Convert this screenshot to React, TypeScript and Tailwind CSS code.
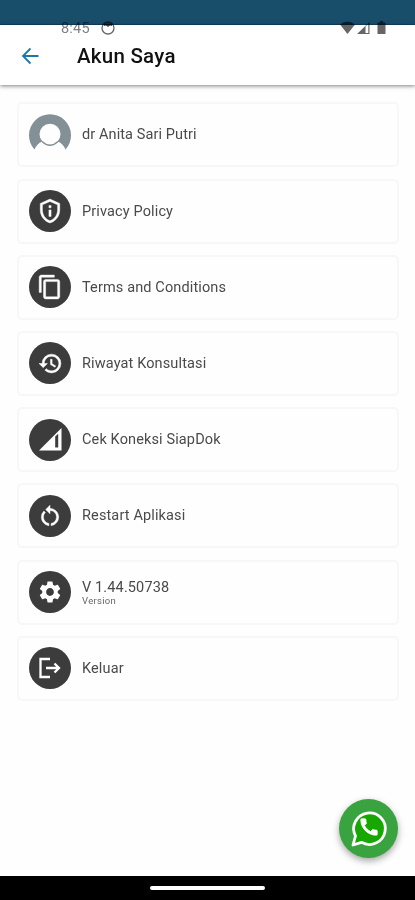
import type { ReactNode } from "react";
import { MdContentCopy, MdHistory, MdOutlinePrivacyTip, MdRestartAlt, MdSettings, MdCall } from "react-icons/md";

type Item = {
  label: string;
  caption?: string;
  textClass: string;
  icon: ReactNode;
  avatar?: boolean;
};

const ITEMS: Item[] = [
  { label: "dr Anita Sari Putri", textClass: "tracking-[0.1px]", icon: <Avatar />, avatar: true },
  {
    label: "Privacy Policy",
    textClass: "tracking-[0.13px]",
    icon: <MdOutlinePrivacyTip className="w-[26px] h-[26px] stroke-current [stroke-width:0.4] [&_path[fill=none]]:stroke-none" />,
  },
  {
    label: "Terms and Conditions",
    textClass: "tracking-[0.13px]",
    icon: <MdContentCopy className="w-[26px] h-[26px] stroke-current [stroke-width:0.4] [&_path[fill=none]]:stroke-none" />,
  },
  {
    label: "Riwayat Konsultasi",
    textClass: "tracking-[0.13px]",
    icon: <MdHistory className="w-[25px] h-[25px] stroke-current [stroke-width:0.5] [&_path[fill=none]]:stroke-none" />,
  },
  { label: "Cek Koneksi SiapDok", textClass: "tracking-[0.13px]", icon: <SignalIcon /> },
  {
    label: "Restart Aplikasi",
    textClass: "tracking-[0.13px]",
    icon: <MdRestartAlt className="w-[26px] h-[26px] stroke-current [stroke-width:0.4] [&_path[fill=none]]:stroke-none" />,
  },
  { label: "V 1.44.50738", caption: "Version", textClass: "tracking-[0.13px]", icon: <MdSettings className="w-[26px] h-[26px]" /> },
  { label: "Keluar", textClass: "tracking-[0.13px]", icon: <ExitIcon /> },
];

function Avatar() {
  return (
    <svg viewBox="0 0 42 42" className="w-[42px] h-[42px]">
      <path
        d="M5.5 35.5A21 21 0 1 1 36.5 35.5C35 31.5 32 28.5 28.5 27.5A10.5 10.5 0 1 0 13.5 27.5C10 28.5 7 31.5 5.5 35.5Z"
        fill="#839197"
      />
      <path d="M13 27.5Q21 35 29 27.5" fill="none" stroke="#839197" strokeWidth="1.3" />
    </svg>
  );
}

function SignalIcon() {
  return (
    <svg viewBox="0 0 24 24" className="w-6 h-6">
      <path d="M1 22.5L23.5 0V22.5ZM17.2 8.5V19.5H20.2V5.7Z" fill="currentColor" fillRule="evenodd" />
    </svg>
  );
}

function ExitIcon() {
  return (
    <svg viewBox="0 0 24 24" className="w-6 h-6" fill="none" stroke="currentColor" strokeWidth="2.3">
      <path d="M12 3H2.5V21H12M8 12H21M16.5 7.5L21 12L16.5 16.5" />
    </svg>
  );
}

function StatusBar() {
  return (
    <div className="absolute top-[21px] left-0 w-full h-[14px] flex items-center pl-[61px] pr-[27px] text-[#666] mix-blend-multiply">
      <span className="mt-[2px] text-[14.5px] leading-[14px] tracking-[0.2px] text-[#808080]">8:45</span>
      <svg viewBox="0 0 14 14" className="w-[14px] h-[14px] ml-[11px]">
        <circle cx="7" cy="7" r="6" fill="none" stroke="currentColor" strokeWidth="1.3" />
        <path d="M3 2.5H11V5L9 4.5L7 6L5 4.5L3 5Z" fill="#553b42" />
      </svg>
      <svg viewBox="0 0 48 14" className="w-12 h-[14px] ml-auto">
        <path d="M0 3.5Q7.5 -2.5 15 3.5L7.5 13Z" fill="currentColor" />
        <path d="M17 13L29.5 1V13ZM25.5 5.5V12H28.3V3Z" fill="currentColor" fillRule="evenodd" />
        <path d="M37.5 1.5H40V0H43V1.5H45.5V13H37.5Z" fill="currentColor" />
      </svg>
    </div>
  );
}

export default function App() {
  return (
    <div className="relative w-full h-[900px] flex flex-col overflow-hidden bg-[#fefefe] font-[Roboto,sans-serif]">
      <div className="h-[25px] shrink-0 bg-[#194e6b] border-b border-[#123f62]" />
      <StatusBar />

      <header className="h-[60px] shrink-0 flex items-center bg-white pl-[21px] shadow-[0_1px_4px_rgba(0,0,0,0.5)]">
        <svg viewBox="0 0 18 18" className="w-[18px] h-[18px] mt-px" fill="none" stroke="#1d78a8" strokeWidth="1.8">
          <path d="M17.5 9H2M9.5 1.5L2 9L9.5 16.5" />
        </svg>
        <h1 className="ml-[38px] mt-px text-[20.5px] leading-6 font-medium tracking-[0.25px] text-[#111]">Akun Saya</h1>
      </header>

      <main className="flex-1 flex flex-col gap-[11.2px] pt-[17.4px] pl-[17px] pr-4">
        {ITEMS.map((item) => (
          <div
            key={item.label}
            className="h-[65px] shrink-0 flex items-center rounded-[5px] border-2 border-[#f7f7f7] bg-[#fefefe] pl-[10px]"
          >
            <div
              className={`w-[42px] h-[42px] shrink-0 rounded-full flex items-center justify-center text-white ${
                item.avatar ? "" : "bg-[#3c3c3c]"
              }`}
            >
              {item.icon}
            </div>
            <div className="ml-[11px] flex flex-col text-[#4a4a4a]">
              <span className={`text-[14.5px] leading-[17px] ${item.textClass}`}>{item.label}</span>
              {item.caption && <span className="-mt-px text-[9.5px] leading-[11px] tracking-[0.3px] text-[#666]">{item.caption}</span>}
            </div>
          </div>
        ))}
      </main>

      <button className="absolute left-[339px] top-[799px] w-[59px] h-[59px] rounded-full bg-[#39a33f] flex items-center justify-center shadow-[0_3px_7px_rgba(0,0,0,0.35)]">
        <svg viewBox="0 0 40 40" className="w-10 h-10">
          <path
            d="M4 36L6.5 27A15.8 15.8 0 1 1 12.5 33.3Z"
            fill="#16a800"
            stroke="#fff"
            strokeWidth="2.8"
            strokeLinejoin="round"
          />
        </svg>
        <MdCall className="absolute left-[19px] top-[17px] w-[22px] h-[22px] text-white stroke-current [stroke-width:0.8] [&_path[fill=none]]:stroke-none" />
      </button>

      <footer className="h-6 shrink-0 bg-black flex items-center justify-center">
        <div className="w-[115px] h-1 rounded-full bg-white" />
      </footer>
    </div>
  );
}
